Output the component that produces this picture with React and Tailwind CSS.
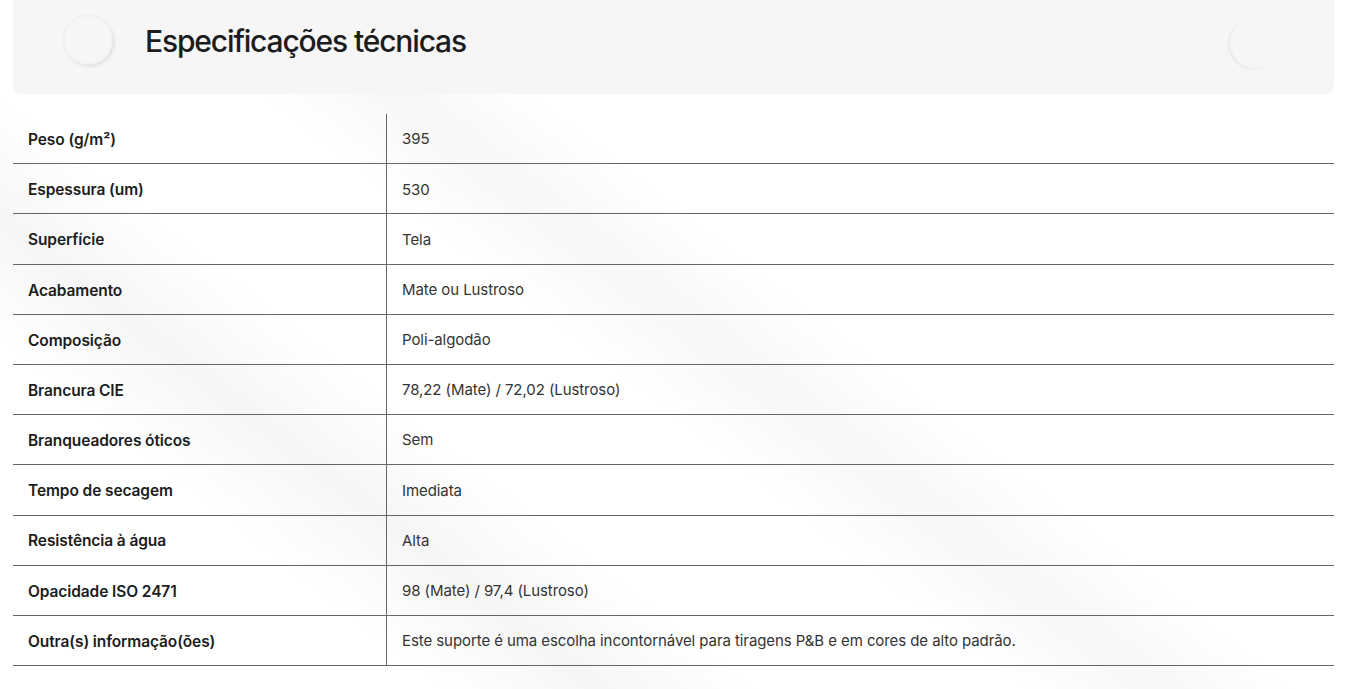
import React from "react";

const rows = [
  ["Peso (g/m²)", "395"],
  ["Espessura (um)", "530"],
  ["Superfície", "Tela"],
  ["Acabamento", "Mate ou Lustroso"],
  ["Composição", "Poli-algodão"],
  ["Brancura CIE", "78,22 (Mate) / 72,02 (Lustroso)"],
  ["Branqueadores óticos", "Sem"],
  ["Tempo de secagem", "Imediata"],
  ["Resistência à água", "Alta"],
  ["Opacidade ISO 2471", "98 (Mate) / 97,4 (Lustroso)"],
  ["Outra(s) informação(ões)", "Este suporte é uma escolha incontornável para tiragens P&B e em cores de alto padrão."],
];

export default function App() {
  return (
    <div
      className="relative w-[1347px] h-[689px] overflow-hidden bg-white bg-[linear-gradient(38deg,#ffffff_0%,#ffffff_20%,#f6f6f6_27%,#ffffff_34%,#ffffff_46%,#f7f7f7_52%,#ffffff_58%,#ffffff_100%)]"
      style={{ fontFamily: "Inter, 'Noto Sans', sans-serif" }}
    >
      <div className="px-[13px]">
        <div className="relative h-[94px] bg-[#f6f6f6] rounded-b-[8px] flex items-center overflow-hidden">
          <div className="absolute left-[50px] top-[15px] w-[50px] h-[50px] rounded-full border border-[#ececec] shadow-[2px_2px_3px_rgba(0,0,0,0.08)]" />
          <div className="absolute left-[1217px] top-[18px] w-[50px] h-[50px] rounded-full shadow-[-2px_1px_3px_rgba(0,0,0,0.06)]" />
          <h2 className="ml-[132px] -mt-[12px] text-[30px] font-medium tracking-[-1.15px] text-[#1c1c1c]">
            Especificações técnicas
          </h2>
        </div>
        <div className="mt-[20px]">
          {rows.map(([label, value], i) => (
            <div key={i} className="flex h-[50.2px] border-b border-[#666]">
              <div className="w-[374px] flex items-center pl-[15px] pt-[2px] border-r border-[#666] text-[15.5px] font-semibold text-[#1c1c1c] tracking-[-0.1px]">
                {label}
              </div>
              <div className="flex-1 flex items-center pl-[15px] pt-[2px] text-[15px] text-[#333] tracking-[-0.08px]">
                {value}
              </div>
            </div>
          ))}
        </div>
      </div>
    </div>
  );
}
